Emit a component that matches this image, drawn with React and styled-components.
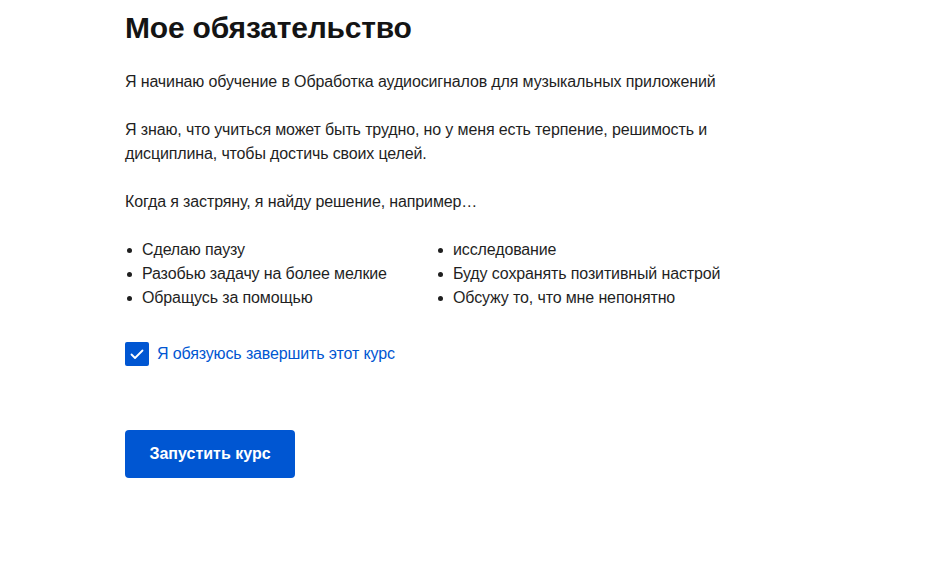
import React, { useState } from "react";
import styled, { createGlobalStyle } from "styled-components";

const Global = createGlobalStyle`
  html, body { margin: 0; padding: 0; background: #fff; }
  body { font-family: "Liberation Sans", Arial, sans-serif; color: #1f1f1f; }
  * { box-sizing: border-box; }
`;

const Page = styled.main`
  padding: 8px 0 0 125px;
  width: 950px;
`;

const Title = styled.h1`
  margin: 0;
  font-size: 30px;
  line-height: 40px;
  font-weight: 700;
  color: #141414;
  letter-spacing: -0.2px;
`;

const Text = styled.p`
  margin: ${(p) => p.$top || 24}px 0 0;
  font-size: 16px;
  line-height: 24px;
  letter-spacing: -0.13px;
  max-width: 600px;
`;

const Lists = styled.div`
  display: grid;
  grid-template-columns: 311px 1fr;
  margin-top: 24px;
  width: 620px;
`;

const List = styled.ul`
  margin: 0;
  padding: 0;
  list-style: none;
`;

const Item = styled.li`
  position: relative;
  padding-left: 17px;
  font-size: 16px;
  line-height: 24px;
  letter-spacing: -0.13px;
  &::before {
    content: "";
    position: absolute;
    left: 2px;
    top: 10px;
    width: 5px;
    height: 5px;
    border-radius: 50%;
    background: #1f1f1f;
  }
`;

const Check = styled.label`
  display: flex;
  align-items: center;
  gap: 8px;
  margin-top: 32px;
  cursor: pointer;
  color: #0056d2;
  font-size: 16px;
  line-height: 24px;
  letter-spacing: -0.13px;
`;

const Box = styled.span`
  width: 24px;
  height: 24px;
  border-radius: 2px;
  background: ${(p) => (p.$on ? "#0056d2" : "#fff")};
  border: ${(p) => (p.$on ? "none" : "1px solid #636363")};
  display: flex;
  align-items: center;
  justify-content: center;
`;

const Hidden = styled.input`
  position: absolute;
  opacity: 0;
  pointer-events: none;
`;

const Button = styled.button`
  margin-top: 64px;
  width: 170px;
  height: 48px;
  border: none;
  border-radius: 4px;
  background: #0056d2;
  color: #fff;
  font-family: "Liberation Sans", Arial, sans-serif;
  font-size: 16px;
  font-weight: 700;
  cursor: pointer;
`;

const left = ["Сделаю паузу", "Разобью задачу на более мелкие", "Обращусь за помощью"];
const right = ["исследование", "Буду сохранять позитивный настрой", "Обсужу то, что мне непонятно"];

export default function App() {
  const [on, setOn] = useState(true);
  return (
    <>
      <Global />
      <Page>
        <Title>Мое обязательство</Title>
        <Text $top={22}>Я начинаю обучение в Обработка аудиосигналов для музыкальных приложений</Text>
        <Text>Я знаю, что учиться может быть трудно, но у меня есть терпение, решимость и дисциплина, чтобы достичь своих целей.</Text>
        <Text>Когда я застряну, я найду решение, например…</Text>
        <Lists>
          <List>{left.map((t) => <Item key={t}>{t}</Item>)}</List>
          <List>{right.map((t) => <Item key={t}>{t}</Item>)}</List>
        </Lists>
        <Check>
          <Hidden type="checkbox" checked={on} onChange={() => setOn(!on)} />
          <Box $on={on}>
            {on && (
              <svg width="16" height="16" viewBox="0 0 16 16" fill="none">
                <path d="M2.5 8.5 L6 12 L13.5 4.5" stroke="#fff" strokeWidth="1.8" strokeLinecap="round" strokeLinejoin="round" />
              </svg>
            )}
          </Box>
          Я обязуюсь завершить этот курс
        </Check>
        <div>
          <Button>Запустить курс</Button>
        </div>
      </Page>
    </>
  );
}
